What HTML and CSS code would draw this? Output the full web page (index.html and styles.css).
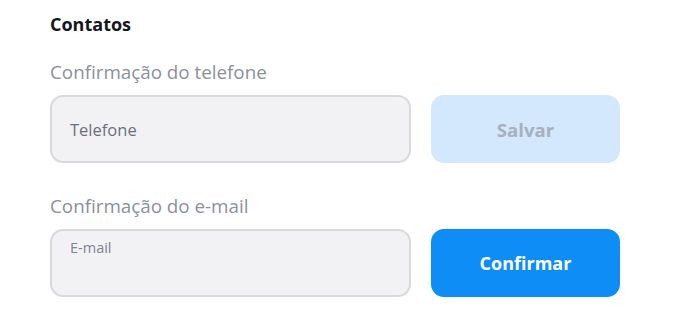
FILE: index.html
```html
<!DOCTYPE html>
<html lang="pt-BR">
<head>
  <meta charset="UTF-8" />
  <meta name="viewport" content="width=device-width, initial-scale=1" />
  <title>Contatos</title>
  <link rel="stylesheet" href="styles.css">
</head>
<body>
  <main class="contacts">
    <h2 class="section-title">Contatos</h2>

    <div class="field-group">
      <label class="field-label">Confirmação do telefone</label>
      <div class="field-row">
        <div class="input-box">
          <span class="placeholder">Telefone</span>
        </div>
        <button class="btn btn-disabled" disabled>Salvar</button>
      </div>
    </div>

    <div class="field-group second">
      <label class="field-label">Confirmação do e-mail</label>
      <div class="field-row">
        <div class="input-box floating">
          <span class="float-label">E-mail</span>
        </div>
        <button class="btn btn-primary">Confirmar</button>
      </div>
    </div>
  </main>
</body>
</html>
```

FILE: styles.css
```css
body {
  margin: 0;
  font-family: "Open Sans", "Noto Sans", sans-serif;
  background-color: #fff;
  color: #1b1c24;
}

.contacts {
  padding: 12px 0 0 50px;
}

.section-title {
  margin: 0;
  font-size: 18px;
  line-height: 24px;
  font-weight: 700;
  color: #15161e;
}

.field-group {
  margin-top: 25px;
}

.field-group.second {
  margin-top: 32px;
}

.field-label {
  display: block;
  font-size: 18.8px;
  line-height: 22px;
  color: #8b8f9c;
  margin-bottom: 12px;
}

.field-row {
  display: flex;
  gap: 20px;
}

.input-box {
  box-sizing: border-box;
  width: 361px;
  height: 68px;
  background-color: #f2f2f5;
  border: 2px solid #d8d9df;
  border-radius: 13px;
  padding: 0 18px;
  display: flex;
  align-items: center;
}

.placeholder {
  font-size: 16.5px;
  color: #6c6f7b;
}

.input-box.floating {
  align-items: flex-start;
  padding-top: 9px;
}

.float-label {
  font-size: 14.5px;
  line-height: 16px;
  color: #7e8292;
}

.btn {
  box-sizing: border-box;
  width: 189px;
  height: 68px;
  border: none;
  border-radius: 13px;
  font-family: inherit;
  font-weight: 700;
  cursor: pointer;
}

.btn-disabled {
  background-color: #d3e8fd;
  color: #a8afbd;
  font-size: 18.6px;
  cursor: default;
}

.btn-primary {
  background-color: #0d8df5;
  color: #fff;
  font-size: 18px;
}
```
